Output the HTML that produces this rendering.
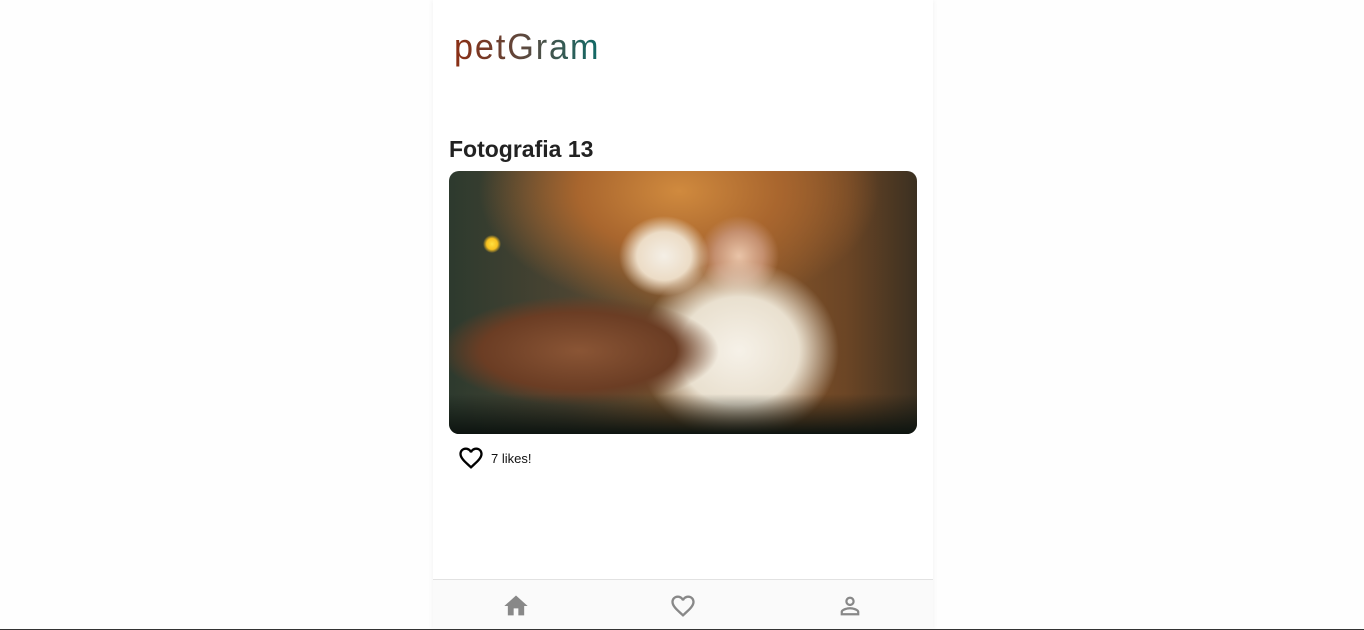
<!DOCTYPE html>
<html><head><meta charset="utf-8"><style>
html,body{margin:0;padding:0;background:#fefefe;width:1364px;height:630px;overflow:hidden;position:relative;font-family:"Liberation Sans",sans-serif}
.app{position:absolute;left:433px;top:0;width:500px;height:630px;background:#fff;box-shadow:0 0 6px rgba(0,0,0,.06)}
.logo{position:absolute;left:21px;top:26px;font-family:"Liberation Sans",sans-serif;font-size:36px;letter-spacing:2px;background:linear-gradient(90deg,#8b2e14,#5a4a40 50%,#0f6b68);-webkit-background-clip:text;color:transparent;font-weight:normal;transform:scaleX(0.95);transform-origin:left}
h2{position:absolute;left:16px;top:136px;margin:0;font-size:23px;font-weight:bold;color:#222;font-family:"Liberation Sans",sans-serif}
.img{position:absolute;left:16px;top:171px;width:468px;height:263px;border-radius:10px;overflow:hidden;
background:
radial-gradient(ellipse 140px 55px at 130px 180px,#8a5535 0,#6b3d24 70%,transparent 100%),
radial-gradient(ellipse 45px 40px at 215px 85px,#f4efe6 0,#ecdcc6 60%,transparent 100%),
radial-gradient(ellipse 100px 90px at 290px 180px,#f6f1e8 0,#e9e0cf 60%,transparent 100%),
radial-gradient(ellipse 40px 40px at 290px 85px,#e9c4a8 0,#c59070 60%,transparent 100%),
radial-gradient(circle 9px at 43px 73px,#ffe040 0,#f7c020 60%,transparent 100%),
radial-gradient(ellipse 200px 120px at 230px 20px,#d08a3e 0,#a9662e 50%,transparent 100%),
linear-gradient(90deg,#2d3a2e 0,#4b4432 25%,#8e5a2c 60%,#6b4525 85%,#3b3021 100%);}
.img::after{content:"";position:absolute;left:0;right:0;bottom:0;height:40px;background:linear-gradient(180deg,transparent,#0d1410)}
.likes{position:absolute;left:24px;top:444px;display:flex;align-items:center;gap:6px;font-size:13px;color:#111}
.nav{position:absolute;left:0;top:579px;width:500px;height:50px;background:#fafafa;border-top:1px solid #e2e2e2}
.nav svg{position:absolute;top:12px}
.line{position:absolute;left:0;top:629px;width:1364px;height:1px;background:#333}
</style></head><body>
<div class="app">
<div class="logo">petGram</div>
<h2>Fotografia 13</h2>
<div class="img"></div>
<div class="likes"><svg width="28" height="28" viewBox="0 0 24 24"><path d="M16.5 3c-1.74 0-3.41.81-4.5 2.09C10.91 3.81 9.24 3 7.5 3 4.42 3 2 5.42 2 8.5c0 3.78 3.4 6.86 8.55 11.54L12 21.35l1.45-1.32C18.6 15.36 22 12.28 22 8.5 22 5.42 19.58 3 16.5 3zm-4.4 15.55l-.1.1-.1-.1C7.14 14.24 4 11.39 4 8.5 4 6.5 5.5 5 7.5 5c1.54 0 3.04.99 3.57 2.36h1.87C13.46 5.99 14.96 5 16.5 5c2 0 3.5 1.5 3.5 3.5 0 2.89-3.14 5.74-7.9 10.05z" fill="#000"/></svg><span>7 likes!</span></div>
<div class="nav">
<svg style="left:69px" width="28" height="28" viewBox="0 0 24 24"><path d="M10 20v-6h4v6h5v-8h3L12 3 2 12h3v8z" fill="#888"/></svg>
<svg style="left:236px" width="28" height="28" viewBox="0 0 24 24"><path d="M16.5 3c-1.74 0-3.41.81-4.5 2.09C10.91 3.81 9.24 3 7.5 3 4.42 3 2 5.42 2 8.5c0 3.78 3.4 6.86 8.55 11.54L12 21.35l1.45-1.32C18.6 15.36 22 12.28 22 8.5 22 5.42 19.58 3 16.5 3zm-4.4 15.55l-.1.1-.1-.1C7.14 14.24 4 11.39 4 8.5 4 6.5 5.5 5 7.5 5c1.54 0 3.04.99 3.57 2.36h1.87C13.46 5.99 14.96 5 16.5 5c2 0 3.5 1.5 3.5 3.5 0 2.89-3.14 5.74-7.9 10.05z" fill="#888"/></svg>
<svg style="left:403px" width="28" height="28" viewBox="0 0 24 24"><path d="M12 5.9c1.16 0 2.1.94 2.1 2.1s-.94 2.1-2.1 2.1S9.9 9.16 9.9 8s.94-2.1 2.1-2.1m0 9c2.97 0 6.1 1.46 6.1 2.1v1.1H5.9V17c0-.64 3.13-2.1 6.1-2.1M12 4C9.79 4 8 5.79 8 8s1.79 4 4 4 4-1.79 4-4-1.79-4-4-4zm0 9c-2.67 0-8 1.34-8 4v3h16v-3c0-2.66-5.33-4-8-4z" fill="#888"/></svg>
</div>
</div>
<div class="line"></div>
</body></html>
